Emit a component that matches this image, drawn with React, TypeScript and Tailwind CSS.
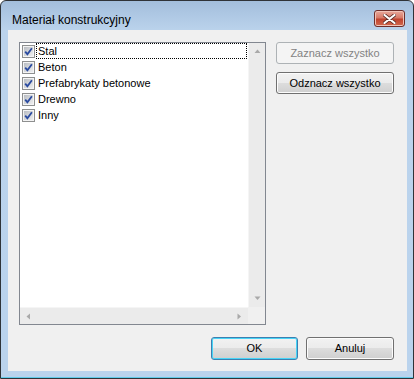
import type React from "react"

const items = [
  { name: "Stal", focused: true },
  { name: "Beton", focused: false },
  { name: "Prefabrykaty betonowe", focused: false },
  { name: "Drewno", focused: false },
  { name: "Inny", focused: false },
]

const CheckBox: React.FC = () => (
  <svg width="13" height="13" viewBox="0 0 13 13" className="shrink-0">
    <defs>
      <linearGradient id="cbfill" x1="0" y1="0" x2="1" y2="1">
        <stop offset="0" stopColor="#b9bdc3" />
        <stop offset="1" stopColor="#eeeeef" />
      </linearGradient>
    </defs>
    <rect x="0.5" y="0.5" width="12" height="12" fill="#f4f4f4" stroke="#8e8f8f" />
    <rect x="2" y="2" width="9" height="9" fill="url(#cbfill)" />
    <path d="M3.2 6.6 L5.4 9.2 L9.9 3.2" fill="none" stroke="#2b4ba0" strokeWidth="1.8" />
  </svg>
)

const Arrow: React.FC<{ dir: "up" | "down" | "left" | "right" }> = ({ dir }) => {
  const d = {
    up: "M0.5 4 L3.5 0.5 L6.5 4 Z",
    down: "M0.5 0.5 L3.5 4 L6.5 0.5 Z",
    left: "M4 0.5 L0.5 3.5 L4 6.5 Z",
    right: "M0.5 0.5 L4 3.5 L0.5 6.5 Z",
  }[dir]
  const vertical = dir === "up" || dir === "down"
  return (
    <svg width={vertical ? 7 : 5} height={vertical ? 5 : 7} viewBox={vertical ? "0 0 7 5" : "0 0 5 7"}>
      <path d={d} fill="#a9a9a9" />
    </svg>
  )
}

const btnBase =
  "flex items-center justify-center rounded-[3px] border text-[11px] leading-none font-['Liberation_Sans',Arial,sans-serif]"

export default function App() {
  return (
    <div className="w-[414px] h-[379px] bg-white font-['Liberation_Sans',Arial,sans-serif]">
      <div className="w-[414px] h-[379px] flex flex-col border border-[#2f3338] rounded-t-[6px] bg-[linear-gradient(to_bottom,#a3bedc_0px,#bbd3ec_30px,#bad3ed_100%)] pl-[7px] pr-[6px] pb-[7px] shadow-[inset_0_-1px_0_#62cbea]">
        {/* title bar */}
        <div className="h-[29px] flex items-start justify-between shrink-0">
          <span className="mt-[12px] ml-[4px] text-[12px] leading-[14px] text-black font-['Liberation_Sans',Arial,sans-serif]">
            Materiał konstrukcyjny
          </span>
          <div className="mt-[9px] mr-[2px] w-[31px] h-[17px] rounded-[3px] border border-[#6e2e2a] bg-[linear-gradient(to_bottom,#e9a99c_0%,#d77a68_45%,#c0432f_55%,#d26a4f_100%)] shadow-[inset_0_0_0_1px_#f0c3b8] flex items-center justify-center">
            <svg width="13" height="10" viewBox="0 0 13 10">
              <path d="M1.5 1 L11.5 9 M11.5 1 L1.5 9" stroke="#5b2b26" strokeWidth="3.6" strokeLinecap="round" />
              <path d="M1.5 1 L11.5 9 M11.5 1 L1.5 9" stroke="#ffffff" strokeWidth="2.2" strokeLinecap="round" />
            </svg>
          </div>
        </div>

        {/* client area */}
        <div className="flex-1 bg-[#f0f0f0] flex flex-col pt-[12px] pl-[11px] pr-[13px] pb-[11px]">
          <div className="flex items-start">
            {/* checklist */}
            <div className="w-[247px] h-[283px] border border-[#828790] bg-white flex flex-col">
              <div className="flex flex-1 min-h-0">
                <div className="flex-1 flex flex-col">
                  {items.map((item) => (
                    <div key={item.name} className="h-[16px] flex items-center pl-[2px]">
                      <CheckBox />
                      <span
                        className={`flex-1 h-[16px] ml-[1px] mr-[1px] pl-[1px] flex items-center text-[11px] leading-none text-black border ${
                          item.focused ? "border-dotted border-black" : "border-transparent"
                        }`}
                      >
                        {item.name}
                      </span>
                    </div>
                  ))}
                </div>
                <div className="w-[17px] bg-[#ebebeb] border-l border-[#f5f5f5] flex flex-col justify-between">
                  <div className="h-[17px] flex items-center justify-center">
                    <Arrow dir="up" />
                  </div>
                  <div className="h-[17px] flex items-center justify-center">
                    <Arrow dir="down" />
                  </div>
                </div>
              </div>
              <div className="h-[17px] flex shrink-0">
                <div className="flex-1 bg-[#ebebeb] border-t border-[#f5f5f5] flex items-center justify-between px-[6px]">
                  <Arrow dir="left" />
                  <Arrow dir="right" />
                </div>
                <div className="w-[17px] bg-[#f0f0f0]" />
              </div>
            </div>

            {/* side buttons */}
            <div className="ml-[10px] flex flex-col gap-[8px]">
              <div className={`${btnBase} w-[118px] h-[22px] border-[#adb2b5] bg-[#f4f4f4] text-[#838383]`}>
                Zaznacz wszystko
              </div>
              <div
                className={`${btnBase} w-[118px] h-[22px] border-[#707070] bg-[linear-gradient(to_bottom,#f2f2f2_0%,#ebebeb_50%,#dddddd_50%,#cfcfcf_100%)] shadow-[inset_0_0_0_1px_#fcfcfc] text-black`}
              >
                Odznacz wszystko
              </div>
            </div>
          </div>

          {/* bottom buttons */}
          <div className="mt-[12px] flex justify-end gap-[8px]">
            <div
              className={`${btnBase} w-[87px] h-[23px] border-[#3c7fb1] bg-[linear-gradient(to_bottom,#f2f2f2_0%,#ebebeb_50%,#dddddd_50%,#cfcfcf_100%)] shadow-[inset_0_0_0_1px_#48d4f6] text-black`}
            >
              OK
            </div>
            <div
              className={`${btnBase} w-[88px] h-[23px] border-[#707070] bg-[linear-gradient(to_bottom,#f2f2f2_0%,#ebebeb_50%,#dddddd_50%,#cfcfcf_100%)] shadow-[inset_0_0_0_1px_#fcfcfc] text-black`}
            >
              Anuluj
            </div>
          </div>
        </div>
      </div>
    </div>
  )
}
